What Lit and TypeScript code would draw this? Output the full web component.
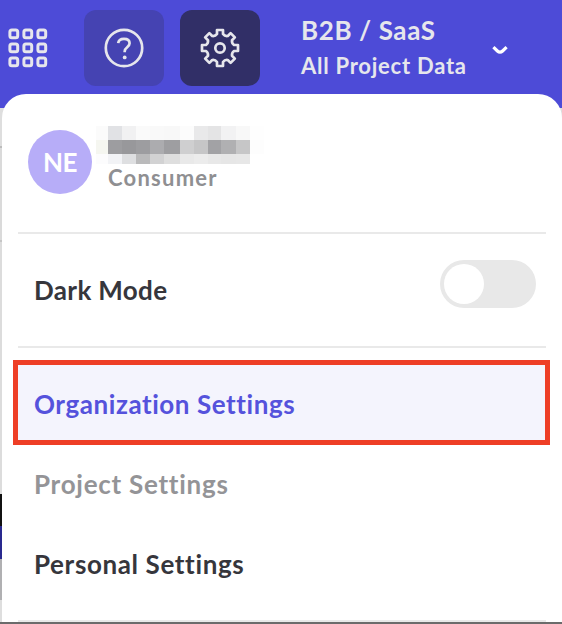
import { LitElement, html, svg, css } from "lit";
import { customElement } from "lit/decorators.js";

const MOSAIC: string[][] = [
  ["#fbfbfb", "#e1e2e5", "#f1f1f2", "#fafafa", "#f9f9f9", "#f8f8f8", "#fcfcfc", "#e9e9ea", "#e4e4e5", "#f2f2f3", "#f8f8f8", "#fefefe"],
  ["#f5f6f0", "#9d9da0", "#98989b", "#9d9da0", "#acacaf", "#9e9ea1", "#cfcfd0", "#c6c6c7", "#a2a2a5", "#b0b0b2", "#c6c6c7", "#fdfdfd"],
  ["#fcfcfd", "#f2f3f6", "#dedfe1", "#bababb", "#d2d2d3", "#dedede", "#e9e9e9", "#ececec", "#e8e8e8", "#e6e6e6", "#e7e7e7", "#ffffff"],
];

const gearPath = (): string => {
  const profile: [number, number][] = [[-3, -14], [-3, -18], [3, -18], [3, -14]];
  const parts: string[] = [];
  for (let i = 0; i < 8; i++) {
    const a = (i * Math.PI) / 4;
    profile.forEach(([x, y], j) => {
      const px = (x * Math.cos(a) - y * Math.sin(a)).toFixed(2);
      const py = (x * Math.sin(a) + y * Math.cos(a)).toFixed(2);
      if (i === 0 && j === 0) parts.push(`M${px} ${py}`);
      else if (j === 0) parts.push(`A5 5 0 0 0 ${px} ${py}`);
      else parts.push(`L${px} ${py}`);
    });
  }
  return parts.join("") + "A5 5 0 0 0 -3 -14Z";
};

@customElement("app-header")
class AppHeader extends LitElement {
  static styles = css`
    :host { display: flex; height: 94px; padding-top: 10px; box-sizing: border-box; color: #e6e6ec; }
    svg { display: block; fill: none; stroke: #e6e6ec; }
    .grid { width: 40px; height: 40px; margin: 18px 36px 0 8px; stroke-width: 3; }
    .button { width: 80px; height: 76px; border-radius: 12px; display: grid; place-items: center; background: #4543b2; margin-right: 16px; }
    .button svg { width: 42px; height: 42px; stroke-width: 2.7; }
    .active { background: #312f67; margin-right: 41px; }
    .project { width: 191px; display: flex; flex-direction: column; font-weight: 700; white-space: nowrap; }
    .name { font-size: 26px; line-height: 32px; margin-top: 4px; letter-spacing: 0.6px; }
    .data { font-size: 22px; line-height: 28px; margin-top: 6px; letter-spacing: 0.75px; }
    .chevron { width: 18px; height: 12px; margin-top: 34px; overflow: visible; }
    .chevron path { stroke: #fff; stroke-width: 3.2; }
  `;
  render() {
    const cells = [5.8, 19.8, 33.8];
    return html`
      <svg class="grid" viewBox="0 0 40 40">
        ${cells.map((y) => cells.map((x) => svg`<rect x=${x - 3.9} y=${y - 3.9} width="7.8" height="7.8" rx="2"></rect>`))}
      </svg>
      <div class="button">
        <svg viewBox="-21 -21 42 42">
          <circle r="18.2"></circle>
          <path d="M-5.8 -4.8C-5.5 -8 -3.2 -9.2 0 -9.2C3.6 -9.2 5.6 -7.3 5.6 -4.7C5.6 -0.8 0.7 -0.8 0.7 3.2V4.3"></path>
          <circle cx="0.7" cy="9.4" r="1.9" fill="#e6e6ec" stroke="none"></circle>
        </svg>
      </div>
      <div class="button active">
        <svg viewBox="-21 -21 42 42"><path d=${gearPath()} stroke-linejoin="round"></path><circle r="4.7"></circle></svg>
      </div>
      <div class="project"><span class="name">B2B / SaaS</span><span class="data">All Project Data</span></div>
      <svg class="chevron" viewBox="0 0 18 12"><path d="M1.4 3.2L5.4 7Q8 9.4 10.6 7L14.6 3.2"></path></svg>
    `;
  }
}

@customElement("settings-menu")
class SettingsMenu extends LitElement {
  static styles = css`
    :host { display: block; box-sizing: border-box; margin-left: 2px; height: 528px; background: #fff; border-radius: 24px 24px 0 0; overflow: hidden; padding: 0 16px; font-size: 26px; font-weight: 700; color: #36363c; white-space: nowrap; }
    .profile { display: flex; height: 138px; box-sizing: border-box; padding: 32px 0 0 10px; }
    .avatar { width: 64px; height: 64px; margin-top: 4px; border-radius: 50%; background: #b7adf8; color: #fff; display: grid; place-items: center; letter-spacing: -0.6px; }
    .identity { padding-left: 4px; }
    .mosaic { display: grid; grid-template-columns: 12px 14px 14px 14px 14px 16px 14px 14px 13px 15px 14px 14px; grid-template-rows: 14px 14px 10px; }
    .role { font-size: 22px; line-height: 28px; color: #8f8f92; padding-left: 12px; letter-spacing: 1.25px; }
    .rule { height: 2px; background: #e9e9e9; }
    .dark { height: 112px; box-sizing: border-box; display: flex; justify-content: space-between; padding: 26px 10px 0 16px; }
    .label { line-height: 60px; letter-spacing: 0.35px; }
    .switch { width: 96px; height: 48px; box-sizing: border-box; border-radius: 24px; padding: 4px; background: #e8e8e8; }
    .knob { width: 40px; height: 40px; border-radius: 50%; background: #fff; }
    .item { height: 80px; line-height: 78px; padding-left: 16px; }
    .selected { box-sizing: border-box; height: 85px; margin: 12px -4px 0 -5px; border: 5px solid #ee3e26; background: #f4f4fd; color: #5552dc; line-height: 78px; letter-spacing: 0.56px; }
    .muted { color: #949497; letter-spacing: 0.73px; }
    .strong { letter-spacing: 0.62px; height: 95px; }
  `;
  render() {
    return html`
      <div class="profile">
        <div class="avatar">NE</div>
        <div class="identity">
          <div class="mosaic">${MOSAIC.flat().map((c) => html`<i style="background:${c}"></i>`)}</div>
          <div class="role">Consumer</div>
        </div>
      </div>
      <div class="rule"></div>
      <div class="dark"><span class="label">Dark Mode</span><div class="switch"><div class="knob"></div></div></div>
      <div class="rule"></div>
      <div class="item selected">Organization Settings</div>
      <div class="item muted">Project Settings</div>
      <div class="item strong">Personal Settings</div>
      <div class="rule"></div>
    `;
  }
}

@customElement("app-root")
class AppRoot extends LitElement {
  static styles = css`
    :host { display: block; width: 562px; height: 624px; overflow: hidden; font-family: Lato, "Liberation Sans", sans-serif;
      background: linear-gradient(#4d4bd7 0 108px, #dedede 108px 146px, #bcbcbc 146px 148px, #dadada 148px 240px, #c6c6c6 240px 242px, #dcdcdc 242px 494px, #111 494px 526px, #29298f 526px 559px, #b0b0b2 559px 600px, #dedede 600px 622px, #6b6b6b 622px); }
  `;
  render() {
    return html`<app-header></app-header><settings-menu></settings-menu>`;
  }
}
